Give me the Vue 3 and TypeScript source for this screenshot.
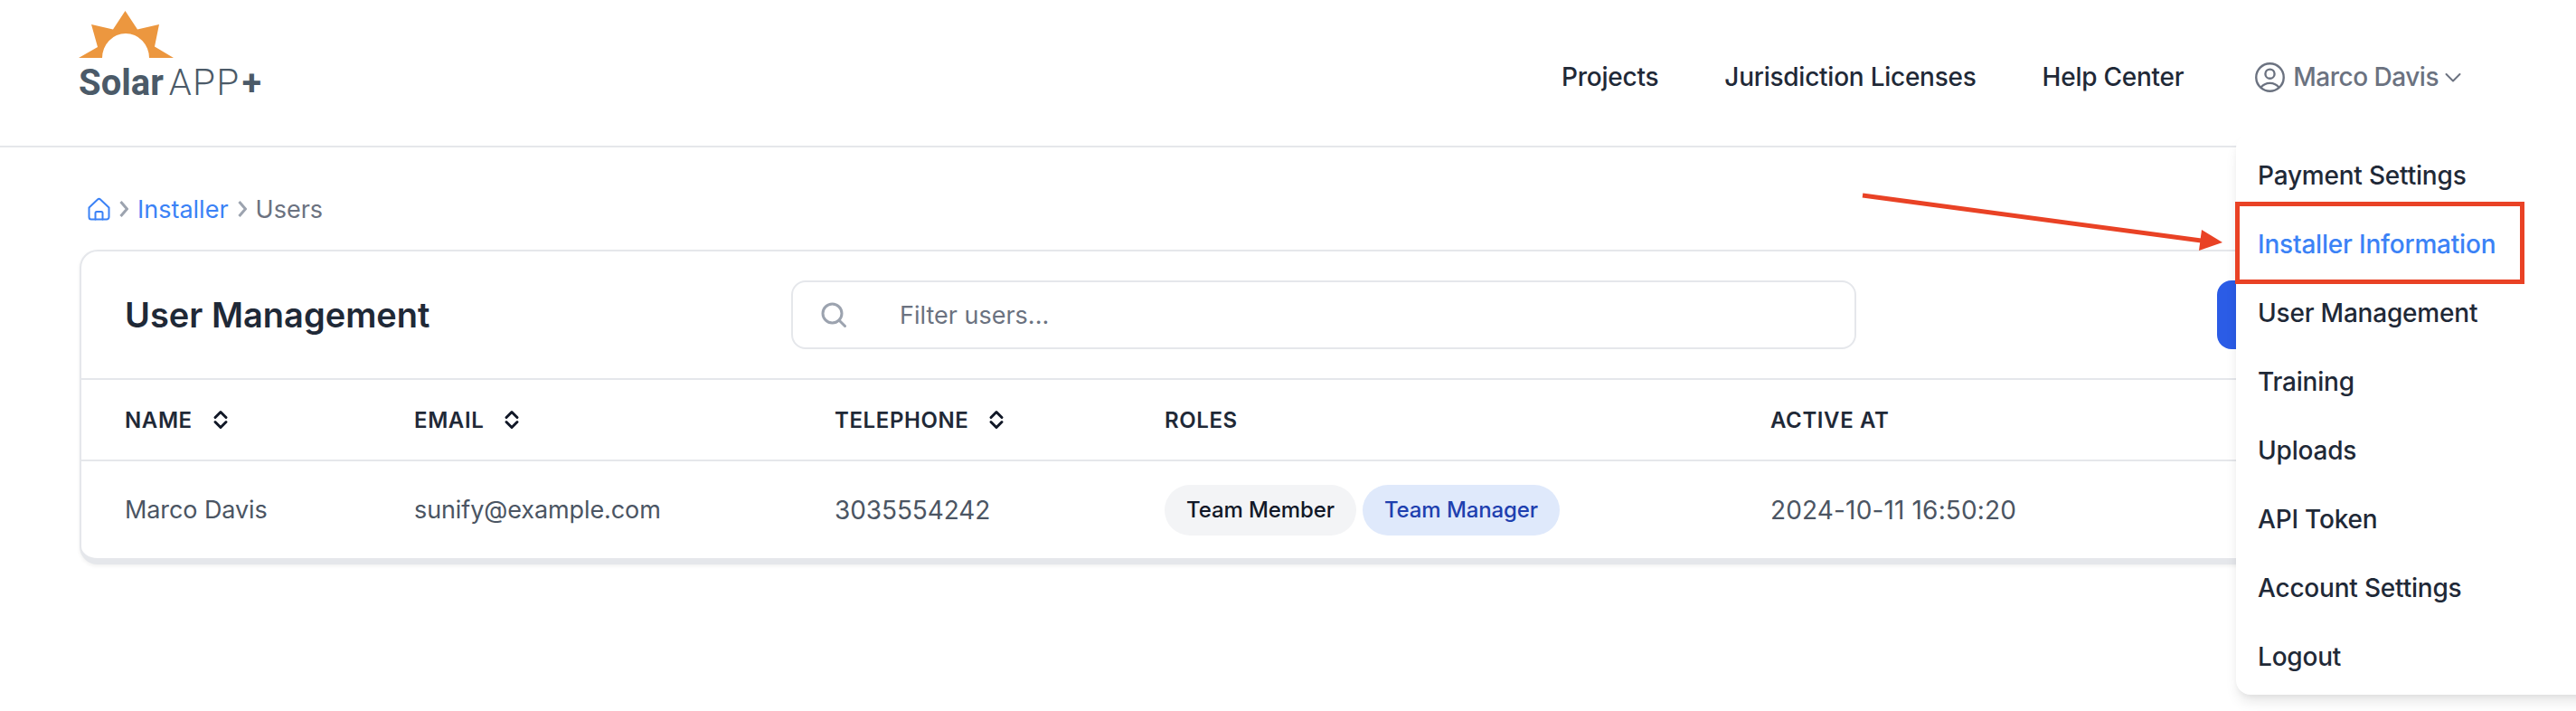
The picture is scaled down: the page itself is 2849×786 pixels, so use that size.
<script setup lang="ts">
interface Col { label: string; sortable: boolean }
const columns: Col[] = [
  { label: 'Name', sortable: true },
  { label: 'Email', sortable: true },
  { label: 'Telephone', sortable: true },
  { label: 'Roles', sortable: false },
  { label: 'Active at', sortable: false },
]
const menu = ['Payment Settings', 'Installer Information', 'User Management', 'Training', 'Uploads', 'API Token', 'Account Settings', 'Logout']
</script>

<template>
  <div class="page">
    <header class="topbar">
      <div class="logo">
        <svg class="sun" width="106" height="54" viewBox="0 0 106 54">
          <path fill="#ec973f" d="M0 53 L21 41 L14 16 L38 21.500 L51.500 1 L65 21.500 L89 16 L84 40.500 L105 53 L78 53 A26 27 0 0 0 26 53 Z" />
        </svg>
        <div class="wordmark"><b>Solar</b><span>APP</span><b class="plus">+</b></div>
      </div>
      <nav class="nav">
        <a>Projects</a>
        <a>Jurisdiction Licenses</a>
        <a>Help Center</a>
        <div class="user">
          <svg width="33" height="33" viewBox="2.25 2.25 19.500 19.500" fill="none" stroke="#6b7280" stroke-width="1.4" stroke-linecap="round" stroke-linejoin="round">
            <path d="M17.982 18.725A7.488 7.488 0 0 0 12 15.750a7.488 7.488 0 0 0-5.982 2.975m11.963 0a9 9 0 1 0-11.963 0m11.963 0A8.966 8.966 0 0 1 12 21a8.966 8.966 0 0 1-5.982-2.275M15 9.750a3 3 0 1 1-6 0 3 3 0 0 1 6 0Z" />
          </svg>
          <span>Marco Davis</span>
          <svg class="chev" width="18" height="12" viewBox="0 0 18 12" fill="none" stroke="#6b7280" stroke-width="2" stroke-linecap="round" stroke-linejoin="round"><path d="M1.500 2 L9 9.500 L16.500 2" /></svg>
        </div>
      </nav>
    </header>

    <main class="content">
      <div class="crumbs">
        <svg width="25" height="26" viewBox="0 0 25 26" fill="none" stroke="#3b82f6" stroke-width="2" stroke-linecap="round" stroke-linejoin="round">
          <path d="M1.500 11.500 11 2.500a2 2 0 0 1 3 0l9.500 9v10.500a2.500 2.500 0 0 1-2.500 2.500h-17a2.500 2.500 0 0 1-2.500-2.500Z" />
          <path d="M8.500 24.500v-7a1.500 1.500 0 0 1 1.500-1.500h5a1.500 1.500 0 0 1 1.500 1.500v7" />
        </svg>
        <svg width="10" height="20" viewBox="0 0 10 20" fill="none" stroke="#9ca3af" stroke-width="3"><path d="M1.500 2l7 8-7 8" /></svg>
        <a>Installer</a>
        <svg width="10" height="20" viewBox="0 0 10 20" fill="none" stroke="#9ca3af" stroke-width="3"><path d="M1.500 2l7 8-7 8" /></svg>
        <span>Users</span>
      </div>

      <section class="card">
        <div class="card-head">
          <h1>User Management</h1>
          <div class="search">
            <svg width="28" height="28" viewBox="0 0 28 28" fill="none" stroke="#9ca3af" stroke-width="3" stroke-linecap="round"><circle cx="12.500" cy="12.500" r="10.500" /><path d="M20.500 20.500l6 6" /></svg>
            <span>Filter users...</span>
          </div>
          <button class="add" aria-label="Add user"></button>
        </div>
        <div class="grid head-row">
          <div v-for="c in columns" :key="c.label" class="th">
            <span>{{ c.label }}</span>
            <svg v-if="c.sortable" width="18" height="24" viewBox="0 0 18 24" fill="none" stroke="#111827" stroke-width="3" stroke-linecap="round" stroke-linejoin="round"><path d="M3 9.500l6-6 6 6M3 14.500l6 6 6-6" /></svg>
          </div>
        </div>
        <div class="grid body-row">
          <div class="td">Marco Davis</div>
          <div class="td">sunify@example.com</div>
          <div class="td num">3035554242</div>
          <div class="td pills"><span class="pill gray">Team Member</span><span class="pill blue">Team Manager</span></div>
          <div class="td num date">2024-10-11 16:50:20</div>
        </div>
      </section>
    </main>

    <ul class="dropdown">
      <li v-for="m in menu" :key="m" :class="{ active: m === 'Installer Information' }">{{ m }}</li>
    </ul>

    <div class="redbox"></div>
    <svg class="arrow" width="420" height="90" viewBox="0 0 420 90">
      <path d="M10 11 L392 62" stroke="#e94225" stroke-width="5" fill="none" />
      <path d="M385 49 L408 63 L382 72 Z" fill="#e94225" />
    </svg>
  </div>
</template>

<style>
html, body { margin: 0; background: #fff; }
</style>

<style scoped>
.page {
  position: relative;
  width: 2849px;
  height: 786px;
  overflow: hidden;
  font-family: Inter, "Liberation Sans", sans-serif;
  font-size: 28px;
  color: #1f2937;
  background: #fff;
}
.topbar {
  height: 161px;
  border-bottom: 2px solid #e5e7eb;
  display: flex;
  justify-content: space-between;
  padding: 0 127px 0 87px;
}
.logo { padding-top: 11px; }
.sun { display: block; }
.wordmark {
  margin-top: 4px;
  font-family: Roboto, sans-serif;
  font-size: 40px;
  line-height: 46px;
  color: #4b5a68;
  white-space: nowrap;
  display: flex;
}
.wordmark b { font-weight: 700; }
.wordmark span { font-weight: 300; margin-left: 6px; letter-spacing: 1.500px; }
.wordmark .plus { margin-left: 2px; font-size: 39px; }
.nav {
  display: flex;
  align-items: center;
  gap: 73px;
  padding-top: 9px;
  font-weight: 500;
  letter-spacing: -0.250px;
  white-space: nowrap;
}
.user {
  display: flex;
  align-items: center;
  margin-left: 6px;
  color: #6b7280;
}
.user span { margin: 0 7px 0 9px; letter-spacing: -0.500px; }
.chev { margin-top: 2px; }
.content { padding: 0 88px; }
.crumbs {
  height: 36px;
  margin-top: 50px;
  padding-left: 9px;
  display: flex;
  align-items: center;
  gap: 10px;
  font-size: 27px;
  color: #6b7280;
}
.crumbs a { color: #3b82f6; }
.card {
  margin-top: 27px;
  border: 2px solid #e5e7eb;
  border-bottom-width: 7px;
  border-radius: 20px;
  background: #fff;
  box-shadow: 0 2px 4px rgba(0, 0, 0, 0.06);
  overflow: hidden;
}
.card-head {
  height: 140px;
  display: flex;
  align-items: center;
  padding: 0 48px;
}
h1 {
  margin: 0;
  flex: none;
  width: 737px;
  font-size: 38px;
  font-weight: 600;
  color: #1f2937;
}
.search {
  flex: none;
  width: 1178px;
  height: 76px;
  box-sizing: border-box;
  border: 2px solid #e5e7eb;
  border-radius: 16px;
  display: flex;
  align-items: center;
  gap: 59px;
  padding-left: 31px;
  font-size: 27px;
  color: #6b7280;
}
.add {
  flex: none;
  margin-left: 399px;
  width: 260px;
  height: 76px;
  border: 0;
  border-radius: 16px;
  background: #2b5ce6;
}
.grid {
  display: grid;
  grid-template-columns: 320px 465px 365px 670px 1fr;
  padding-left: 48px;
  border-top: 2px solid #e5e7eb;
}
.head-row { height: 88px; }
.body-row { height: 107px; }
.th {
  display: flex;
  align-items: center;
  gap: 22px;
  font-size: 24px;
  font-weight: 600;
  letter-spacing: 0.600px;
  text-transform: uppercase;
  color: #1f2937;
}
.td {
  display: flex;
  align-items: center;
  font-size: 27px;
  letter-spacing: -0.100px;
  color: #4b5563;
}
.td.num { font-size: 28px; letter-spacing: -0.100px; }
.td.date { letter-spacing: 0.150px; }
.pills { gap: 7px; }
.pill {
  height: 56px;
  padding: 0 24px;
  border-radius: 28px;
  display: flex;
  align-items: center;
  font-size: 24px;
  font-weight: 500;
  letter-spacing: -0.100px;
}
.gray { background: #f3f4f6; color: #111827; }
.blue { background: #dfe9fb; color: #1e40af; }
.dropdown {
  position: absolute;
  left: 2473px;
  top: 148px;
  width: 420px;
  height: 620px;
  box-sizing: border-box;
  margin: 0;
  padding: 8px 0 0 24px;
  list-style: none;
  background: #fff;
  border-radius: 16px;
  box-shadow: 0 10px 15px -3px rgba(0, 0, 0, 0.1), 0 4px 6px -2px rgba(0, 0, 0, 0.05);
  font-weight: 500;
  letter-spacing: -0.200px;
}
.dropdown li { height: 76px; line-height: 76px; color: #1f2937; }
.dropdown li.active { color: #3b82f6; }
.redbox {
  position: absolute;
  left: 2472px;
  top: 223px;
  width: 320px;
  height: 91px;
  box-sizing: border-box;
  border: 5px solid #e94225;
}
.arrow { position: absolute; left: 2050px; top: 205px; }
</style>
